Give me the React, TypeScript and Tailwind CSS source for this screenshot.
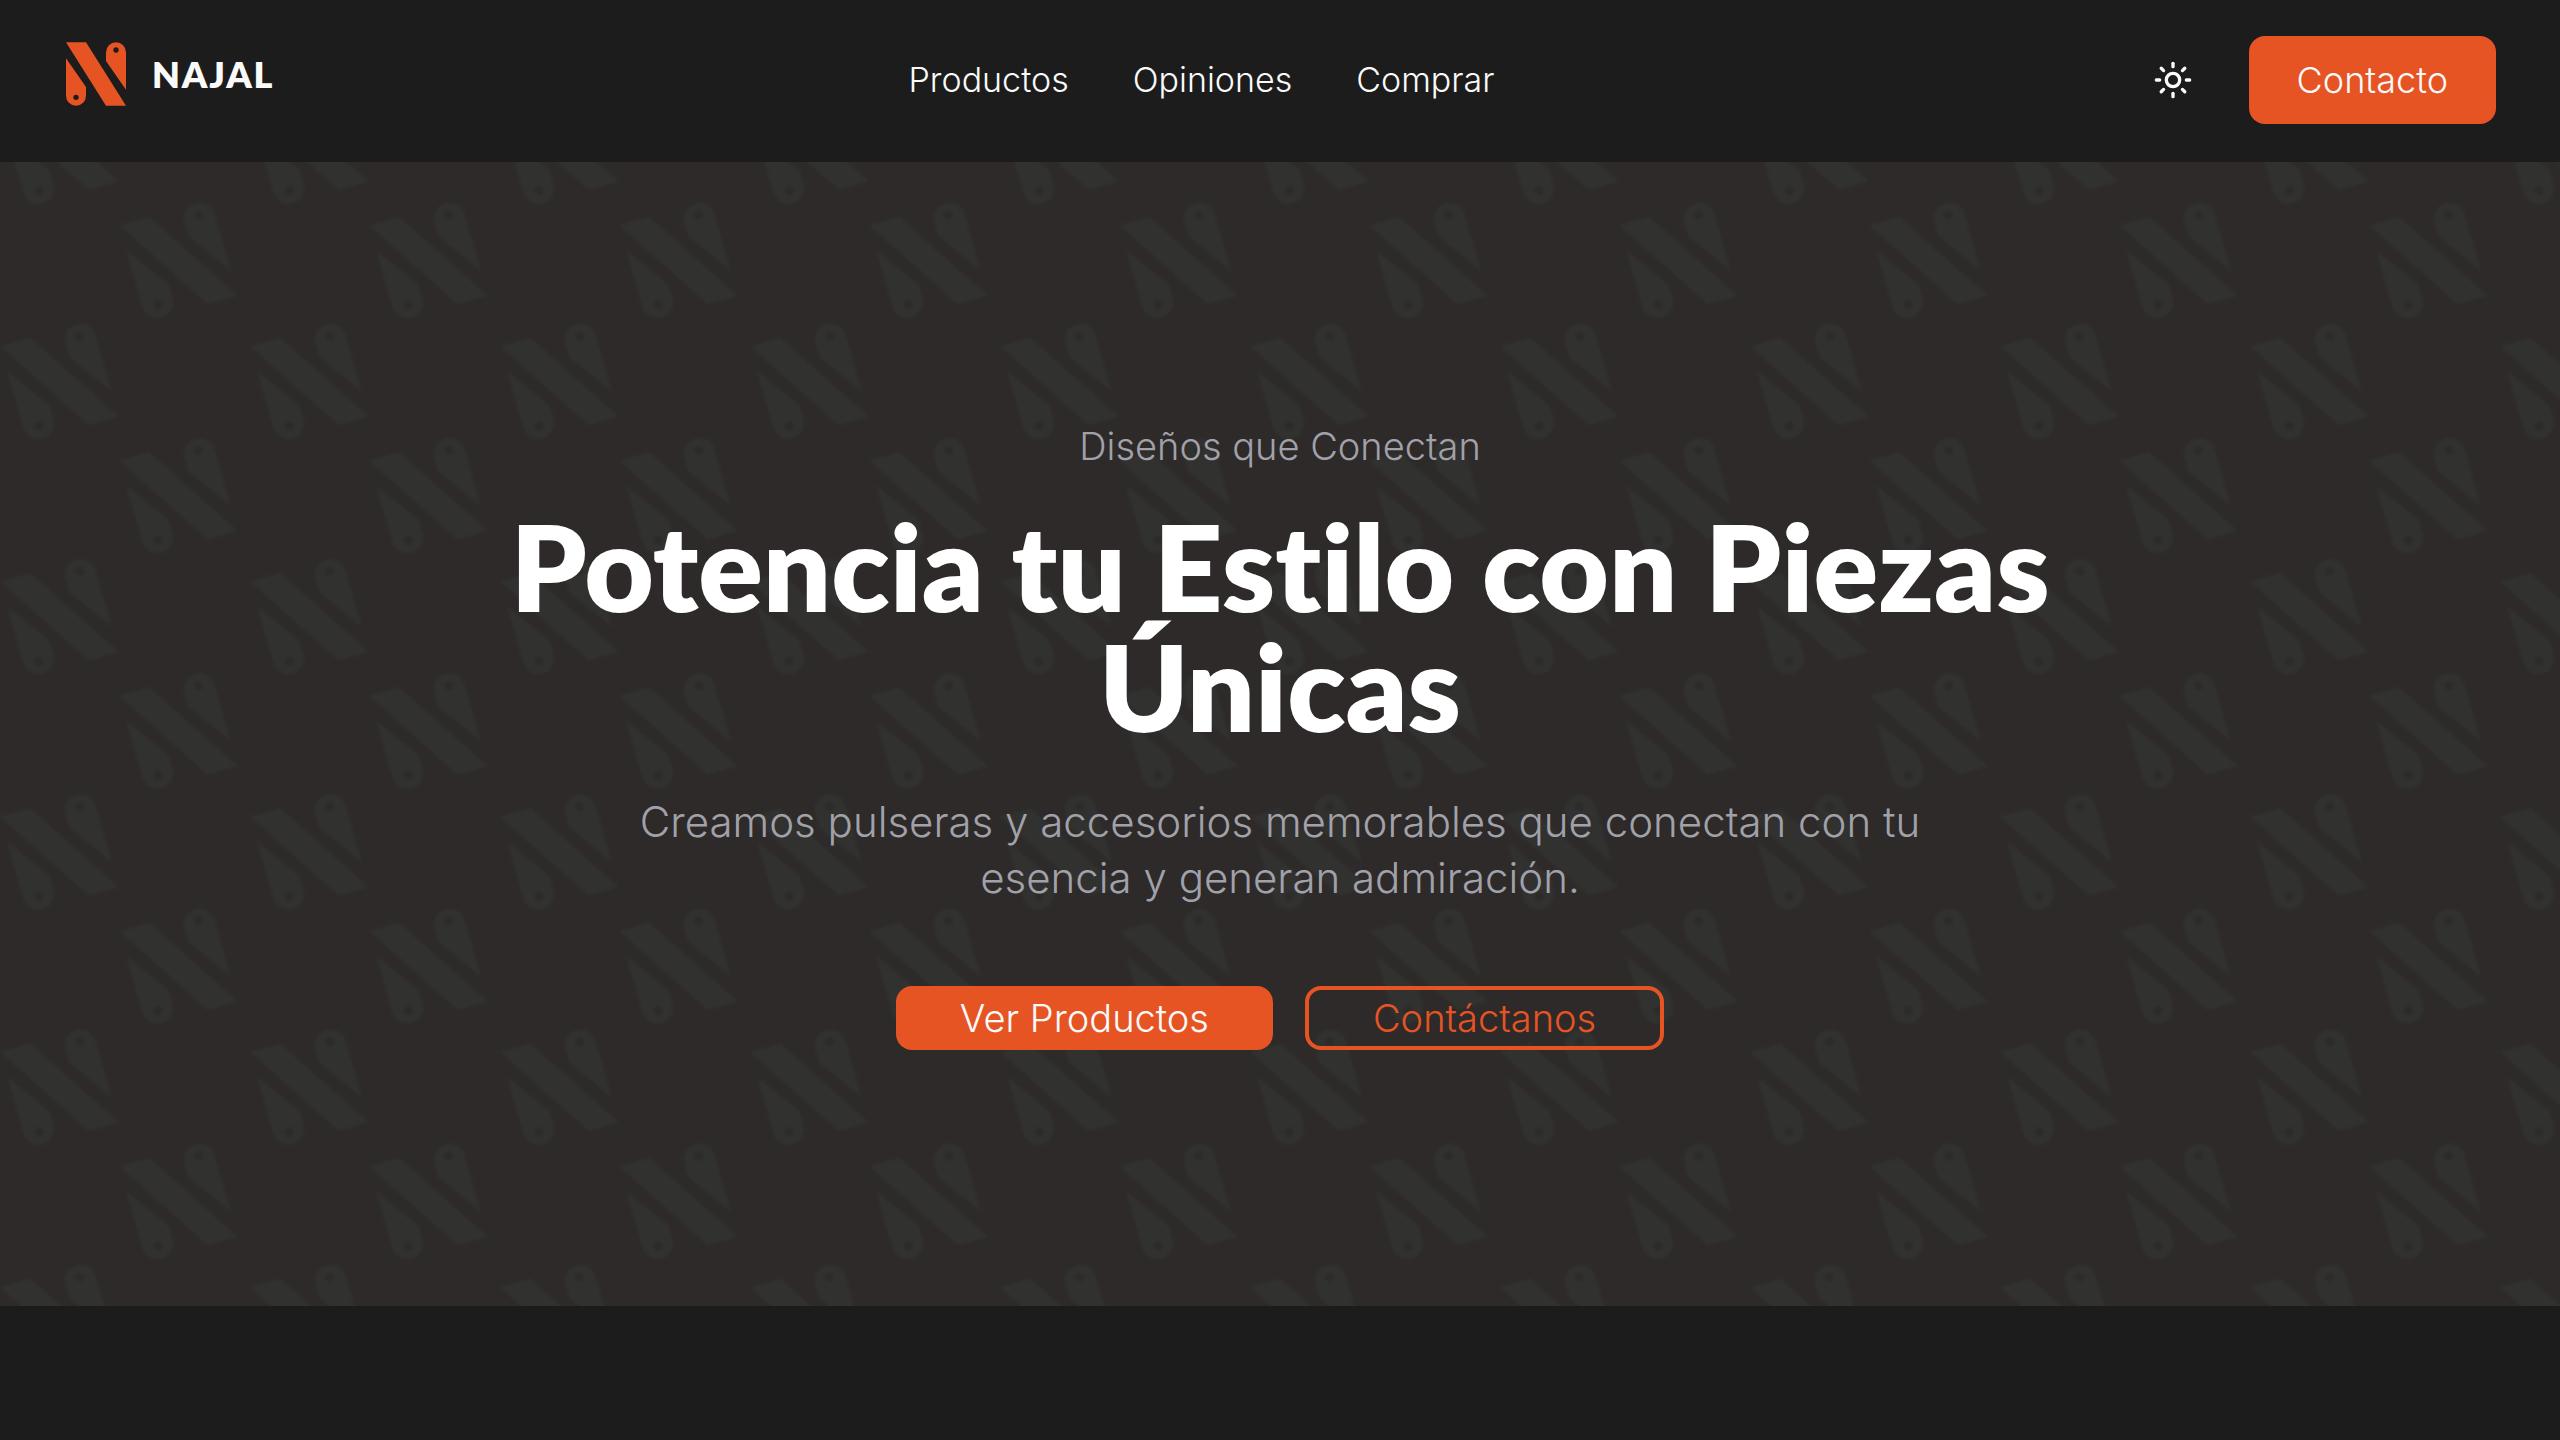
import { useState } from "react";
import { Moon, Sun } from "lucide-react";

const LINKS = [
    { label: "Productos", href: "#productos" },
    { label: "Opiniones", href: "#opiniones" },
    { label: "Comprar", href: "#comprar" },
];

// The "N" mark: a diagonal strap between two drilled drops, in a 180x190 box
function MarkShape() {
    return (
        <>
            <path d="M0 0H60L180 190H120Z" />
            <path
                fillRule="evenodd"
                d="M0 48L60 134V160A30 30 0 0 1 0 160ZM30 157A8 8 0 1 0 30 173A8 8 0 1 0 30 157Z"
            />
            <path
                fillRule="evenodd"
                d="M180 142L120 56V30A30 30 0 0 1 180 30ZM150 15A8 8 0 1 0 150 31A8 8 0 1 0 150 15Z"
            />
        </>
    );
}

function Logo() {
    return (
        <a href="#inicio" className="flex items-center gap-6 pb-3">
            <svg viewBox="-6 0 192 190" className="size-16 shrink-0 fill-[#e65424]" aria-hidden="true">
                <MarkShape />
            </svg>
            <span className="font-['Lato',sans-serif] text-4xl font-extrabold tracking-wider text-[#fafafa]">
                NAJAL
            </span>
        </a>
    );
}

function HeroPattern() {
    return (
        <svg className="absolute inset-0 size-full" aria-hidden="true">
            <defs>
                <filter id="soft" colorInterpolationFilters="sRGB">
                    <feGaussianBlur stdDeviation="1.5" />
                </filter>
                <g id="mark" className="fill-[#31312f]" filter="url(#soft)">
                    <g transform="rotate(-16) scale(0.53) translate(-90 -95)">
                        <MarkShape />
                    </g>
                </g>
                <pattern id="marks" width="250" height="235.25" patternUnits="userSpaceOnUse">
                    <use href="#mark" x="178.5" y="98.5" />
                    <use href="#mark" x="59.5" y="219.5" />
                    <use href="#mark" x="59.5" y="-15.75" />
                    <use href="#mark" x="309.5" y="219.5" />
                    <use href="#mark" x="309.5" y="-15.75" />
                </pattern>
            </defs>
            <rect width="100%" height="100%" fill="url(#marks)" />
        </svg>
    );
}

export default function App() {
    const [dark, setDark] = useState(true);

    return (
        <div className="min-h-screen bg-[#1c1c1c] font-['Inter',sans-serif] text-[#fafafa]">
            <header className="flex items-center justify-between border-b-2 border-[#1c1c1c] px-16 py-9">
                <Logo />
                <nav className="flex items-center gap-16">
                    {LINKS.map((link) => (
                        <a key={link.href} href={link.href} className="text-[34px] leading-10 font-light">
                            {link.label}
                        </a>
                    ))}
                </nav>
                <div className="flex items-center gap-8">
                    <button
                        type="button"
                        aria-label="Cambiar tema"
                        onClick={() => setDark(!dark)}
                        className="flex size-22 items-center justify-center rounded-2xl"
                    >
                        {dark ? <Sun className="size-10" /> : <Moon className="size-10" />}
                    </button>
                    <a
                        href="#contacto"
                        className="rounded-2xl bg-[#e65424] px-12 py-6 text-4xl leading-10 font-light"
                    >
                        Contacto
                    </a>
                </div>
            </header>

            <main className="relative bg-[#2d2a29]">
                <HeroPattern />
                <section className="relative mx-auto flex max-w-[1728px] flex-col items-center px-8 py-64 text-center">
                    <p className="text-[38px] leading-14 font-light text-[#a1a1aa]">Diseños que Conectan</p>
                    <h1 className="mt-8 font-['Lato',sans-serif] text-[120px] leading-[120px] font-extrabold text-white [font-variant-ligatures:none]">
                        Potencia tu Estilo con Piezas Únicas
                    </h1>
                    <p className="mt-12 max-w-[1344px] text-[42px] leading-14 font-light text-[#a1a1aa]">
                        Creamos pulseras y accesorios memorables que conectan con tu esencia y generan admiración.
                    </p>
                    <div className="mt-20 flex gap-8">
                        <a
                            href="#productos"
                            className="flex h-16 items-center rounded-2xl bg-[#e65424] px-16 text-[38px] font-light"
                        >
                            Ver Productos
                        </a>
                        <a
                            href="#contacto"
                            className="flex h-16 items-center rounded-2xl border-4 border-[#e65424] px-16 text-[38px] font-light text-[#e65424]"
                        >
                            Contáctanos
                        </a>
                    </div>
                </section>
            </main>
        </div>
    );
}
